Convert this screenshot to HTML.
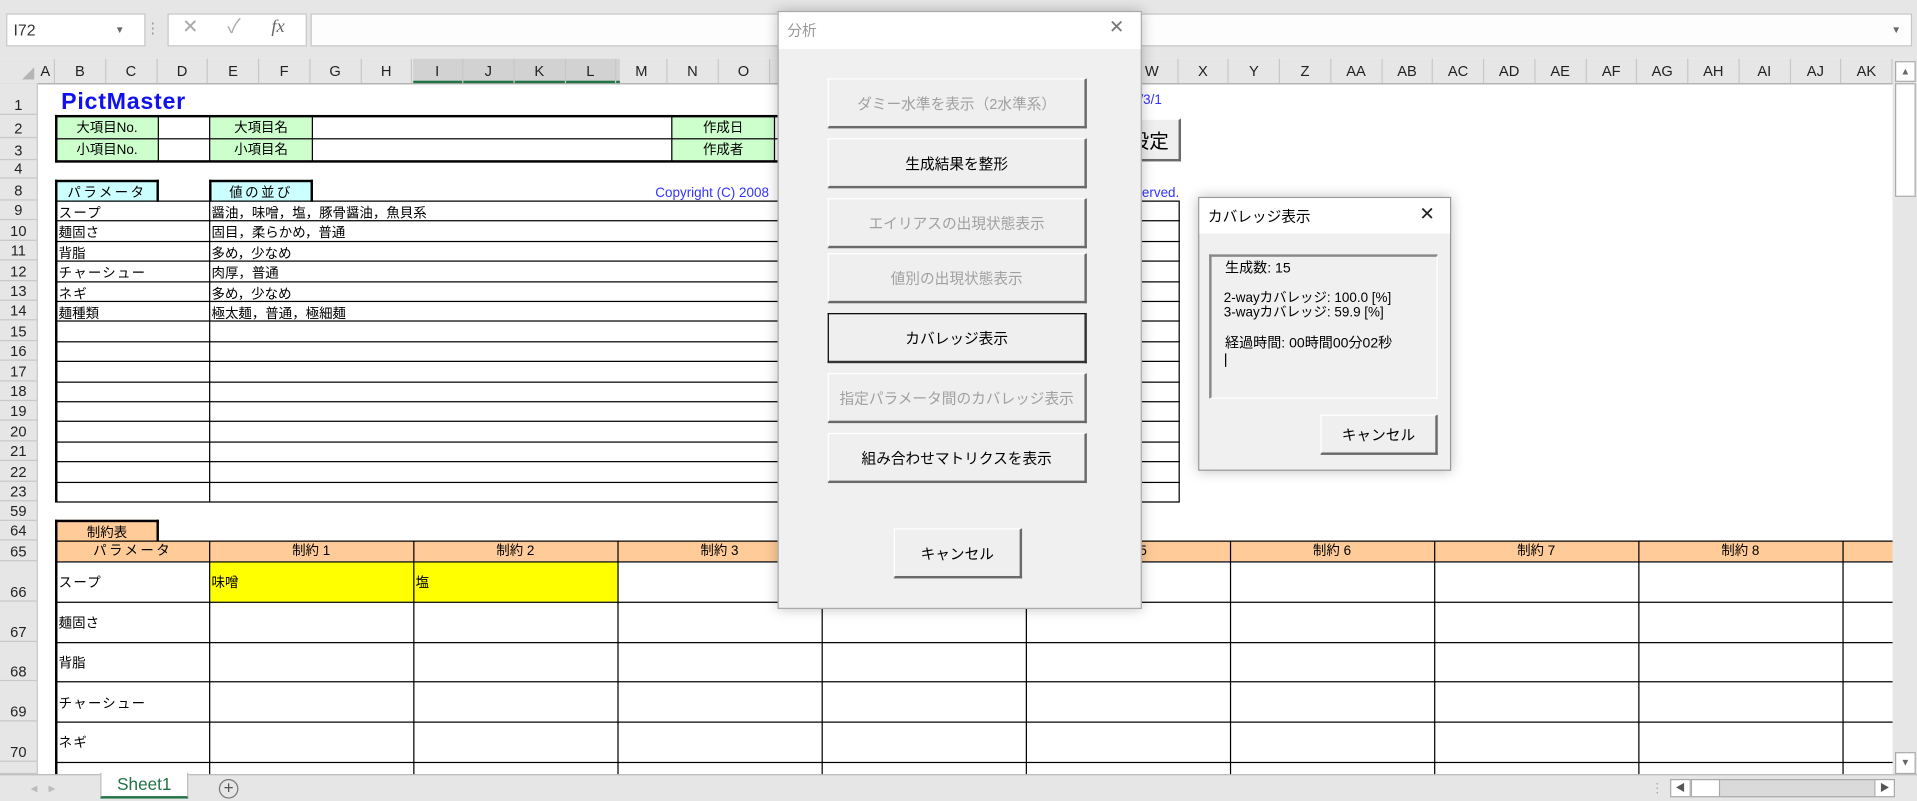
<!DOCTYPE html>
<html><head><meta charset="utf-8"><style>
*{margin:0;padding:0;box-sizing:border-box}
html,body{width:1917px;height:801px;overflow:hidden;background:#fff}
#w{position:absolute;left:0;top:0;width:1568px;height:655px;transform:scale(1.22258,1.2229);transform-origin:0 0;font-family:"Liberation Sans","Noto Sans CJK JP",sans-serif;font-size:11px;color:#000;background:#fff}
.a{position:absolute}
.ch{position:absolute;top:48px;height:20px;text-align:center;line-height:20px;font-size:12px;color:#222;border-right:1px solid #c8c8c8}
.rh{position:absolute;left:0;width:30px;text-align:center;font-size:12px;color:#222;border-bottom:1px solid #c8c8c8;display:flex;align-items:flex-end;justify-content:center}
.hl{position:absolute;height:1px;background:#000}
.vl{position:absolute;width:1px;background:#000}
.c{position:absolute;display:flex;align-items:center;justify-content:center;font-size:11px;line-height:13px;padding-top:2px}
.t{position:absolute;font-size:11px;line-height:14px;white-space:nowrap}
.m{margin-top:2px}
.btn{position:absolute;background:#efefef;border:1px solid #fff;border-right:2px solid #6a6a6a;border-bottom:2px solid #6a6a6a;display:flex;align-items:center;justify-content:center;font-size:12px}
.dis{color:#a0a0a0}
</style></head><body><div id="w">
<div class="a" style="left:0;top:0;width:1568px;height:48px;background:#e6e6e6"></div>
<div class="a" style="left:5px;top:11px;width:114px;height:27px;background:#fff;border:1px solid #c6c6c6"></div>
<div class="t" style="left:11px;top:18px;font-size:13px;color:#333">I72</div>
<div class="t" style="left:94px;top:18px;font-size:8px;color:#666">▼</div>
<div class="t" style="left:119px;top:16px;color:#999;font-size:12px">⋮</div>
<div class="a" style="left:137px;top:11px;width:114px;height:27px;background:#fff;border:1px solid #c6c6c6"></div>
<div class="t" style="left:149px;top:16px;font-size:16px;color:#aaa">✕</div>
<div class="t" style="left:186px;top:16px;font-size:16px;color:#aaa">✓</div>
<div class="t" style="left:222px;top:15px;font-size:15px;color:#666;font-style:italic;font-family:'Liberation Serif',serif">fx</div>
<div class="a" style="left:254px;top:11px;width:1310px;height:27px;background:#fdfdfd;border:1px solid #c6c6c6"></div>
<div class="t" style="left:1547px;top:18px;font-size:8px;color:#666">▼</div>
<div class="a" style="left:0;top:48px;width:1548px;height:21px;background:#e6e6e6;border-bottom:1px solid #aaa"></div>
<div class="a" style="left:338px;top:48px;width:169px;height:20px;background:#d2d2d2;border-bottom:2px solid #217346"></div>
<div class="a" style="left:18px;top:55px;width:0;height:0;border-left:10px solid transparent;border-bottom:10px solid #b5b5b5"></div>
<div id="cols"></div>
<div class="a" style="left:0;top:68px;width:31px;height:565px;background:#e6e6e6;border-right:1px solid #c8c8c8"></div>
<div id="rows"></div>
<div class="a" style="left:1548px;top:48px;width:20px;height:587px;background:#e6e6e6"></div>
<div class="a" style="left:1550px;top:50px;width:17px;height:17px;background:#fff;border:1px solid #aaa;font-size:8px;text-align:center;line-height:15px;color:#666">▲</div>
<div class="a" style="left:1550px;top:68px;width:17px;height:93px;background:#fff;border:1px solid #aaa"></div>
<div class="a" style="left:1550px;top:615px;width:17px;height:18px;background:#fff;border:1px solid #aaa;font-size:8px;text-align:center;line-height:16px;color:#666">▼</div>
<div class="a" style="left:0;top:633px;width:1568px;height:22px;background:#e6e6e6;border-top:1px solid #bbb"></div>
<div class="t" style="left:25px;top:638px;color:#bbb">◂ &nbsp; ▸</div>
<div class="a" style="left:82px;top:632px;width:72px;height:21px;background:#fff;border-bottom:2px solid #217346;border-left:1px solid #bbb;border-right:1px solid #bbb;color:#217346;font-size:14px;text-align:center;line-height:19px">Sheet1</div>
<div class="a" style="left:179px;top:637px;width:16px;height:16px;border:1px solid #777;border-radius:50%;text-align:center;line-height:13px;color:#555;font-size:14px">+</div>
<div class="t" style="left:1350px;top:638px;color:#aaa">⋮</div>
<div class="a" style="left:1366px;top:637px;width:184px;height:15px;background:#dadada;border:1px solid #aaa"></div>
<div class="a" style="left:1366px;top:637px;width:17px;height:15px;background:#fff;border:1px solid #aaa;font-size:8px;line-height:13px;text-align:center;color:#555">◀</div>
<div class="a" style="left:1383px;top:637px;width:24px;height:15px;background:#fff;border:1px solid #aaa"></div>
<div class="a" style="left:1533px;top:637px;width:17px;height:15px;background:#fff;border:1px solid #aaa;font-size:8px;line-height:13px;text-align:center;color:#555">▶</div>

<div class="t" style="left:50px;top:74px;font-size:19px;line-height:20px;font-weight:bold;color:#1111ee;letter-spacing:0.6px">PictMaster</div>
<div class="t" style="left:932px;top:75px;font-size:11px;color:#3333ff">/3/1</div>
<div class="t" style="left:536px;top:151px;font-size:11px;color:#3333ff">Copyright (C) 2008</div>
<div class="t" style="left:934px;top:151px;font-size:11px;color:#3333ff">erved.</div>
<div class="btn" style="left:900px;top:97px;width:66px;height:35px;font-size:16px;justify-content:flex-end;padding-right:8px">設定</div>
<div class="c" style="left:46px;top:95px;width:83px;height:18px;background:#ccffcc">大項目No.</div>
<div class="c" style="left:46px;top:114px;width:83px;height:17px;background:#ccffcc">小項目No.</div>
<div class="c" style="left:172px;top:95px;width:83px;height:18px;background:#ccffcc">大項目名</div>
<div class="c" style="left:172px;top:114px;width:83px;height:17px;background:#ccffcc">小項目名</div>
<div class="c" style="left:550px;top:95px;width:83px;height:18px;background:#ccffcc">作成日</div>
<div class="c" style="left:550px;top:114px;width:83px;height:17px;background:#ccffcc">作成者</div>
<div class="a" style="left:45px;top:94px;width:600px;height:39px;border:2px solid #000;border-right:none"></div>
<div class="hl" style="left:45px;top:113px;width:600px"></div>
<div class="vl" style="left:129px;top:94px;height:38px"></div>
<div class="vl" style="left:171px;top:94px;height:38px"></div>
<div class="vl" style="left:255px;top:94px;height:38px"></div>
<div class="vl" style="left:549px;top:94px;height:38px"></div>
<div class="vl" style="left:633px;top:94px;height:38px"></div>
<div class="c" style="left:45px;top:147px;width:85px;height:18px;background:#ccffff;border:2px solid #000;border-bottom:none;letter-spacing:2px">パラメータ</div>
<div class="c" style="left:171px;top:147px;width:85px;height:18px;background:#ccffff;border:2px solid #000;border-bottom:none;letter-spacing:2px">値の並び</div>
<div class="a" style="left:45px;top:164px;width:920px;height:247px;border:1px solid #000;border-left:2px solid #000"></div>
<div class="vl" style="left:171px;top:164px;height:246px"></div>
<div id="t1"></div>
<div class="t m" style="left:48px;top:166px;letter-spacing:1px">スープ</div>
<div class="t m" style="left:48px;top:182px">麺固さ</div>
<div class="t m" style="left:48px;top:199px">背脂</div>
<div class="t m" style="left:48px;top:215px;letter-spacing:1px">チャーシュー</div>
<div class="t m" style="left:48px;top:232px;letter-spacing:1px">ネギ</div>
<div class="t m" style="left:48px;top:248px">麺種類</div>
<div class="t m" style="left:173px;top:166px">醤油，味噌，塩，豚骨醤油，魚貝系</div>
<div class="t m" style="left:173px;top:182px">固目，柔らかめ，普通</div>
<div class="t m" style="left:173px;top:199px">多め，少なめ</div>
<div class="t m" style="left:173px;top:215px">肉厚，普通</div>
<div class="t m" style="left:173px;top:232px">多め，少なめ</div>
<div class="t m" style="left:173px;top:248px">極太麺，普通，極細麺</div>
<div class="c" style="left:45px;top:425px;width:85px;height:18px;background:#ffcc99;border:2px solid #000;border-bottom:none">制約表</div>
<div class="a" style="left:45px;top:442px;width:1503px;height:17px;background:#ffcc99"></div>
<div class="a" style="left:172px;top:460px;width:333px;height:32px;background:#ffff00"></div>
<div id="t2"></div>
<div class="a" style="left:45px;top:442px;width:2px;height:191px;background:#000"></div>
<div class="c" style="left:46px;top:442px;width:125px;height:17px;letter-spacing:2px">パラメータ</div>
<div class="t m" style="left:48px;top:468px;letter-spacing:1px">スープ</div>
<div class="t m" style="left:48px;top:501px">麺固さ</div>
<div class="t m" style="left:48px;top:534px">背脂</div>
<div class="t m" style="left:48px;top:567px;letter-spacing:1px">チャーシュー</div>
<div class="t m" style="left:48px;top:599px;letter-spacing:1px">ネギ</div>
<div class="t m" style="left:173px;top:468px">味噌</div>
<div class="t m" style="left:340px;top:468px">塩</div>

<div class="a" style="left:636px;top:9px;width:298px;height:489px;background:#f0f0f0;border:1px solid #aaa;box-shadow:0 0 10px rgba(0,0,0,.25)"></div>
<div class="a" style="left:637px;top:10px;width:296px;height:30px;background:#fff"></div>
<div class="t" style="left:644px;top:18px;color:#999;font-size:12px">分析</div>
<div class="t" style="left:907px;top:16px;color:#777;font-size:15px">✕</div>
<div class="btn dis" style="left:677px;top:64px;width:212px;height:41px">ダミー水準を表示（2水準系）</div>
<div class="btn" style="left:677px;top:113px;width:212px;height:41px">生成結果を整形</div>
<div class="btn dis" style="left:677px;top:162px;width:212px;height:41px">エイリアスの出現状態表示</div>
<div class="btn dis" style="left:677px;top:207px;width:212px;height:41px">値別の出現状態表示</div>
<div class="btn" style="left:677px;top:256px;width:212px;height:41px;border:1px solid #000;border-right:2px solid #333;border-bottom:2px solid #333">カバレッジ表示</div>
<div class="btn dis" style="left:677px;top:305px;width:212px;height:41px">指定パラメータ間のカバレッジ表示</div>
<div class="btn" style="left:677px;top:354px;width:212px;height:41px">組み合わせマトリクスを表示</div>
<div class="btn" style="left:731px;top:432px;width:105px;height:41px">キャンセル</div>

<div class="a" style="left:980px;top:161px;width:207px;height:224px;background:#f0f0f0;border:1px solid #999;box-shadow:0 0 10px rgba(0,0,0,.25)"></div>
<div class="a" style="left:981px;top:162px;width:205px;height:29px;background:#fff"></div>
<div class="t" style="left:988px;top:170px;font-size:12px">カバレッジ表示</div>
<div class="t" style="left:1161px;top:169px;font-size:15px;color:#222">✕</div>
<div class="a" style="left:989px;top:208px;width:187px;height:118px;background:#f0f0f0;border:2px solid #888;border-right:1px solid #fff;border-bottom:1px solid #fff"></div>
<div class="t" style="left:1002px;top:213px;font-size:11.5px">生成数: 15</div>
<div class="t" style="left:1001px;top:238px;font-size:11px;line-height:12px">2-wayカバレッジ: 100.0 [%]</div>
<div class="t" style="left:1001px;top:250px;font-size:11px;line-height:12px">3-wayカバレッジ: 59.9 [%]</div>
<div class="t" style="left:1002px;top:274px;font-size:11.5px">経過時間: 00時間00分02秒</div>
<div class="a" style="left:1002px;top:289px;width:1px;height:11px;background:#000"></div>
<div class="btn" style="left:1080px;top:339px;width:96px;height:33px">キャンセル</div>

<script>
var cols=document.getElementById('cols'),h='';
var names=['B','C','D','E','F','G','H','I','J','K','L','M','N','O','P','Q','R','S','T','U','V','W','X','Y','Z','AA','AB','AC','AD','AE','AF','AG','AH','AI','AJ','AK'];
h+='<div class="ch" style="left:30px;width:15px">A</div>';
for(var i=0;i<names.length;i++){var l=45+i*41.75;h+='<div class="ch" style="left:'+l+'px;width:41.75px">'+names[i]+'</div>';}
cols.innerHTML=h;
var rb=[[1,68,94],[2,94,113],[3,113,131],[4,131,146],[8,146,164]];
var y=164;for(var r=9;r<=23;r++){rb.push([r,y,y+16.4]);y+=16.4;}
rb.push([59,410,426],[64,426,442],[65,442,459]);
y=459;for(r=66;r<=70;r++){rb.push([r,y,y+32.8]);y+=32.8;}
rb.push([71,623,633]);
h='';rb.forEach(function(b){h+='<div class="rh" style="top:'+b[1]+'px;height:'+(b[2]-b[1])+'px;line-height:1;padding-bottom:1px">'+(b[0]==71?'':b[0])+'</div>';});
document.getElementById('rows').innerHTML=h;
h='';for(y=164+16.4,r=0;r<14;r++,y+=16.4){h+='<div class="hl" style="left:45px;top:'+y+'px;width:920px"></div>';}
document.getElementById('t1').innerHTML=h;
h='';[442,459,492,524.5,557,590,622.5].forEach(function(t){h+='<div class="hl" style="left:45px;top:'+t+'px;width:1503px"></div>';});
var xs=[171];for(i=1;i<=8;i++)xs.push(171+i*167);
xs.forEach(function(x){h+='<div class="vl" style="left:'+x+'px;top:442px;height:191px"></div>';});
for(i=0;i<8;i++){h+='<div class="c" style="left:'+(171+i*167)+'px;top:442px;width:167px;height:17px">制約 '+(i+1)+'</div>';}
document.getElementById('t2').innerHTML=h;
</script>
</div></body></html>
